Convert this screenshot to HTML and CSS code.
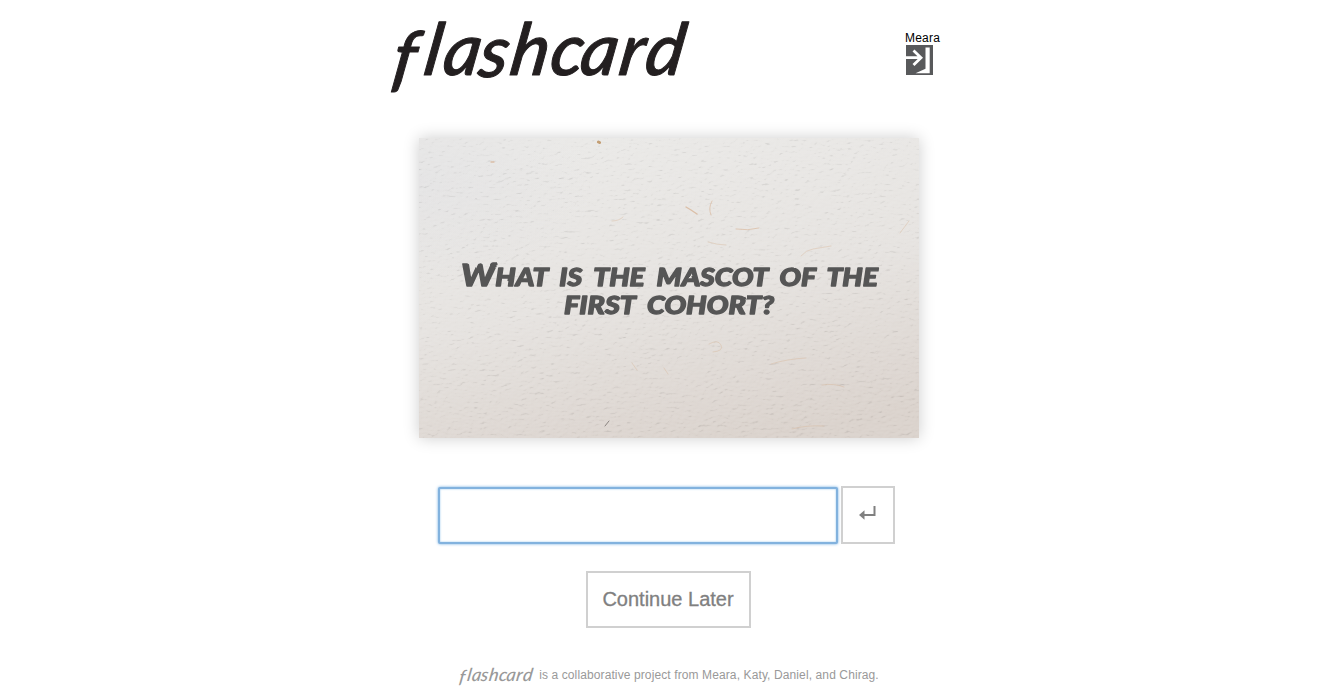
FILE: index.html
```html
<!DOCTYPE html>
<html lang="en">
<head>
<meta charset="utf-8">
<title>flashcard</title>
<link rel="stylesheet" href="styles.css">
</head>
<body>
<div class="page">
  <header class="header">
    <svg class="logo" viewBox="0 0 302 76" role="img" aria-label="flashcard">
      <text class="logo-text" transform="translate(0 57) skewX(-9)" x="3 34 53 89 120 160 190 229 255" y="8 0 0 2 0 0 0 0 0">flashcard</text>
    </svg>
    <div class="user">
      <span class="user-name">Meara</span>
      <svg class="logout" viewBox="0 0 27 30">
        <rect width="27" height="30" fill="#58595b"/>
        <path d="M0 12.7H14M7.5 5.5L15 12.7L7.5 20" fill="none" stroke="#fff" stroke-width="2.8"/>
        <path d="M19.5 2.5H23.7V28.3H9.5L19.5 23.8Z" fill="#fff"/>
      </svg>
    </div>
  </header>
  <main class="main">
    <section class="card">
      <svg class="paper" viewBox="0 0 500 300">
        <defs>
          <filter id="grain" x="0" y="0" width="100%" height="100%" color-interpolation-filters="sRGB">
            <feTurbulence type="fractalNoise" baseFrequency="0.17 0.34" numOctaves="4" seed="12"/>
            <feColorMatrix values="0 0 0 0 0  0 0 0 0 0  0 0 0 0 0  1 0 0 0 0" result="height"/>
            <feDiffuseLighting in="height" lighting-color="#fff" surfaceScale="1" diffuseConstant="0.62">
              <feDistantLight azimuth="240" elevation="63"/>
            </feDiffuseLighting>
          </filter>
          <linearGradient id="tone" x1="0.35" y1="0" x2="0.65" y2="1">
            <stop offset="0" stop-color="#eae9e7"/>
            <stop offset="0.5" stop-color="#e6e3e0"/>
            <stop offset="1" stop-color="#dad2cc"/>
          </linearGradient>
          <radialGradient id="edge" cx="0" cy="0.15" r="0.35">
            <stop offset="0" stop-color="#dfdfe2" stop-opacity="0.5"/>
            <stop offset="1" stop-color="#dfdfe2" stop-opacity="0"/>
          </radialGradient>
        </defs>
        <rect width="500" height="300" fill="url(#tone)"/>
        <rect width="500" height="300" fill="url(#edge)"/>
        <rect class="grain" width="500" height="300" filter="url(#grain)"/>
        <g fill="none" stroke="#d8b598" stroke-linecap="round" stroke-width="1" opacity=".8">
          <path d="M179.500 4l1 .5" stroke="#b98b56" stroke-width="3"/>
          <path d="M72 24h3M267 69l5 3 6 4" stroke-width="1.4"/>
          <path d="M293 63q-4 7-1 14M317 91q12 2 23-1" opacity=".8"/>
          <path d="M289 104q10 3 18 3M382 118q5-6 12-7l18-3M481 95l9-12M193 83q7 0 11-4M213 225l5 7M245 230l4 6M290 206q9-5 12 1t-8 7M352 226q16-5 35-6M403 247q12-2 22 2M373 291q14-4 32-3" opacity=".5"/>
          <path d="M186 288l4-5" stroke="#756f6b"/>
        </g>
      </svg>
      <svg class="ink-defs" width="0" height="0">
        <filter id="ink" x="-5%" y="-10%" width="110%" height="120%">
          <feTurbulence type="fractalNoise" baseFrequency="0.06" numOctaves="1" seed="4"/>
          <feDisplacementMap in="SourceGraphic" scale="2" xChannelSelector="R" yChannelSelector="G" result="warped"/>
          <feGaussianBlur in="warped" stdDeviation="0.3"/>
        </filter>
      </svg>
      <svg class="question" viewBox="0 0 500 300">
        <text class="question-text" x="42" y="148" textLength="417" lengthAdjust="spacingAndGlyphs"><tspan class="initial">W</tspan>hat is the mascot of the</text>
        <text class="question-text" x="145" y="176" textLength="210" lengthAdjust="spacingAndGlyphs">first cohort?</text>
      </svg>
    </section>
    <form class="answer">
      <input class="answer-input" type="text" aria-label="Answer">
      <button class="submit" type="button" aria-label="Submit">
        <svg class="return" viewBox="0 0 17 14"><path d="M15.500 0V9H4" fill="none" stroke="#808080" stroke-width="2"/><path d="M0 9L5.500 4.300V13.700Z" fill="#808080"/></svg>
      </button>
    </form>
    <button class="later" type="button">Continue Later</button>
  </main>
  <footer class="footer">
    <svg class="footer-logo" viewBox="0 0 302 76" role="img" aria-label="flashcard">
      <text class="logo-text" transform="translate(0 57) skewX(-9)" x="3 34 53 89 120 160 190 229 255" y="8 0 0 2 0 0 0 0 0">flashcard</text>
    </svg>
    <span class="credit">is a collaborative project from Meara, Katy, Daniel, and Chirag.</span>
  </footer>
</div>
</body>
</html>
```
FILE: styles.css
```css
* { box-sizing: border-box; }
body {
  margin: 0;
  background: #fff;
  font-family: "Liberation Sans", Helvetica, Arial, sans-serif;
}
.page {
  width: 560px;
  height: 696px;
  margin: 0 auto;
  display: flex;
  flex-direction: column;
  overflow: hidden;
}
.header {
  display: flex;
  justify-content: space-between;
  padding: 18px 8px 0 0;
  height: 138px;
}
.logo { width: 302px; height: 76px; overflow: visible; fill: #231f20; stroke: #231f20; }
.logo-text {
  font-family: "Lato", sans-serif;
  font-size: 72px;
  font-style: italic;
  font-weight: 500;
  stroke-width: 1px;
  stroke-linejoin: round;
}
.user {
  display: flex;
  flex-direction: column;
  width: 35px;
  padding-top: 13px;
}
.user-name { font-size: 12px; line-height: 14px; letter-spacing: 0.2px; color: #000; }
.logout { width: 27px; height: 30px; margin-left: 1px; }
.main {
  display: flex;
  flex-direction: column;
  align-items: center;
}
.card {
  display: grid;
  width: 500px;
  height: 300px;
  margin-left: 2px;
  box-shadow: 0 0 15px rgba(0, 0, 0, 0.2);
}
.paper, .question { grid-area: 1 / 1; width: 500px; height: 300px; }
.ink-defs { position: absolute; }
.grain { mix-blend-mode: hard-light; opacity: 0.35; }
.paper { isolation: isolate; }
.question { filter: url(#ink); }
.question-text {
  font-family: "Permanent Marker", "Lato", sans-serif;
  font-size: 25px;
  font-weight: 900;
  font-style: italic;
  text-transform: uppercase;
  word-spacing: 5px;
  fill: #555;
  stroke: #555;
  stroke-width: 1.3px;
  stroke-linejoin: round;
}
.initial { font-size: 31px; }
.answer {
  display: flex;
  align-items: center;
  gap: 3px;
  margin-top: 48px;
  padding-right: 4px;
}
.answer-input {
  width: 400px;
  height: 57px;
  border: 2px solid #82b2de;
  border-radius: 2px;
  outline: 0;
  padding: 0 12px;
  font: 20px "Liberation Sans", sans-serif;
  box-shadow: 0 0 3px #6daae0, inset 0 0 2px #8fc0ea;
}
.submit, .later {
  background: #fff;
  border: 2px solid #d0d0d0;
  color: #808080;
  padding: 0;
}
.submit {
  width: 54px;
  height: 58px;
  display: flex;
  justify-content: center;
  align-items: center;
  padding-bottom: 5px;
}
.return { width: 17px; height: 14px; }
.later {
  width: 165px;
  height: 57px;
  margin-top: 27px;
  font: 20px "Liberation Sans", sans-serif;
  -webkit-text-stroke: 0.3px #808080;
}
.footer {
  display: flex;
  justify-content: center;
  align-items: center;
  gap: 5px;
  margin-top: 37px;
  height: 22px;
  padding-left: 1px;
}
.footer-logo { width: 76px; height: 20px; fill: #999; overflow: visible; }
.credit { font-size: 12px; line-height: 16px; letter-spacing: 0.11px; color: #999; margin-top: -3px; white-space: nowrap; }
```
